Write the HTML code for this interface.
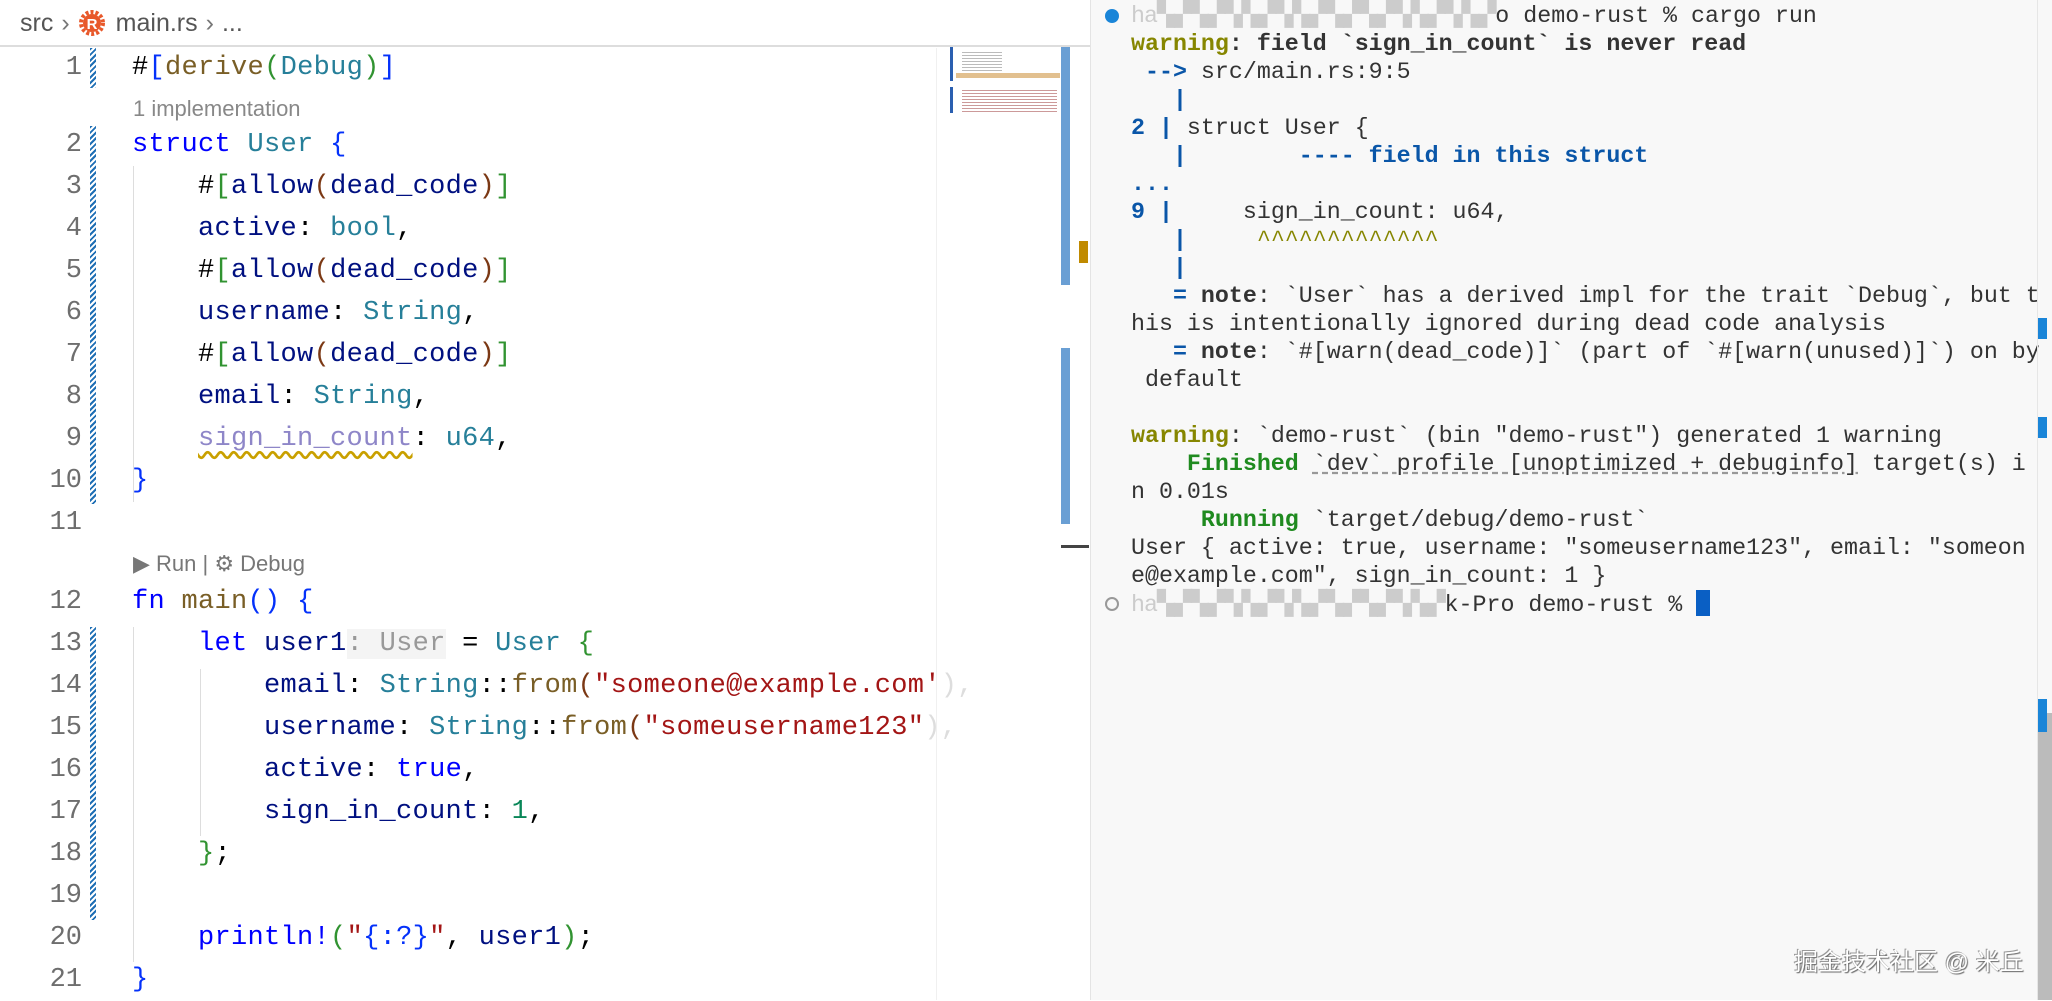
<!DOCTYPE html>
<html><head><meta charset="utf-8"><style>
*{margin:0;padding:0;box-sizing:border-box}
body{width:2052px;height:1000px;overflow:hidden;background:#fff;position:relative;font-family:"Liberation Sans",sans-serif}
.ed{position:absolute;left:0;top:0;width:1090px;height:1000px;background:#fff}
.bc{position:absolute;left:0;top:0;width:1090px;height:47px;border-bottom:2px solid #ddd;font-size:25px;color:#555;line-height:47px}
.ln{position:absolute;left:0;width:82px;text-align:right;font-family:"Liberation Mono",monospace;font-size:27px;color:#6e6e6e;line-height:42px}
.cd{position:absolute;left:132px;font-family:"Liberation Mono",monospace;font-size:27px;letter-spacing:0.3px;line-height:42px;white-space:pre;color:#001080}
.lens{position:absolute;left:133px;font-size:22px;color:#888;line-height:42px}
.hatch{position:absolute;left:90px;width:6px;background:repeating-linear-gradient(135deg,#1f6fb5 0 2px,#fff 2px 4px)}
.guide{position:absolute;width:1px;background:#ddd}
.k{color:#0000ff}.t{color:#267f99}.f{color:#795e26}.s{color:#a31515}.n{color:#098658}.b1{color:#0431fa}.b2{color:#319331}.b3{color:#7b3814}.p{color:#000}
.term{position:absolute;left:1090px;top:0;width:962px;height:1000px;background:#f8f8f8;border-left:1px solid #e4e4e4}
.tl{position:absolute;left:40px;font-family:"Liberation Mono",monospace;font-size:23.3px;line-height:28px;white-space:pre;color:#333}
.w{color:#868600;font-weight:bold}.bl{color:#0a56a8;font-weight:bold}.g{color:#1f8a1f;font-weight:bold}.bo{font-weight:bold}
.red{color:#ccc;letter-spacing:-1px}
</style></head><body>
<div class="ed">
<div class="bc"><span style="margin-left:20px">src</span><span style="margin:0 8px;color:#777">›</span><svg width="28" height="28" viewBox="0 0 28 28" style="vertical-align:-6px"><circle cx="14" cy="14" r="11" fill="none" stroke="#e8582a" stroke-width="4" stroke-dasharray="3 2"/><circle cx="14" cy="14" r="9" fill="#e8582a"/><text x="14" y="20" font-size="15" text-anchor="middle" fill="#fff" font-family="Liberation Sans" font-weight="bold">R</text></svg><span style="margin-left:10px">main.rs</span><span style="margin:0 8px;color:#777">›</span><span>...</span></div>

<div class="hatch" style="top:48px;height:40px"></div>
<div class="hatch" style="top:126px;height:378px"></div>
<div class="hatch" style="top:627px;height:293px"></div>
<div class="guide" style="left:133px;top:166px;height:336px"></div>
<div class="guide" style="left:133px;top:627px;height:335px"></div>
<div class="guide" style="left:200px;top:669px;height:167px"></div>

<div class="ln" style="top:47px">1</div><div class="cd" style="top:47px"><span class="p">#</span><span class="b1">[</span><span class="f">derive</span><span class="b2">(</span><span class="t">Debug</span><span class="b2">)</span><span class="b1">]</span></div>
<div class="lens" style="top:88px">1 implementation</div>
<div class="ln" style="top:124px">2</div><div class="cd" style="top:124px"><span class="k">struct</span> <span class="t">User</span> <span class="b1">{</span></div>
<div class="ln" style="top:166px">3</div><div class="cd" style="top:166px">    <span class="p">#</span><span class="b2">[</span>allow<span class="b3">(</span>dead_code<span class="b3">)</span><span class="b2">]</span></div>
<div class="ln" style="top:208px">4</div><div class="cd" style="top:208px">    active<span class="p">:</span> <span class="t">bool</span><span class="p">,</span></div>
<div class="ln" style="top:250px">5</div><div class="cd" style="top:250px">    <span class="p">#</span><span class="b2">[</span>allow<span class="b3">(</span>dead_code<span class="b3">)</span><span class="b2">]</span></div>
<div class="ln" style="top:292px">6</div><div class="cd" style="top:292px">    username<span class="p">:</span> <span class="t">String</span><span class="p">,</span></div>
<div class="ln" style="top:334px">7</div><div class="cd" style="top:334px">    <span class="p">#</span><span class="b2">[</span>allow<span class="b3">(</span>dead_code<span class="b3">)</span><span class="b2">]</span></div>
<div class="ln" style="top:376px">8</div><div class="cd" style="top:376px">    email<span class="p">:</span> <span class="t">String</span><span class="p">,</span></div>
<div class="ln" style="top:418px">9</div><div class="cd" style="top:418px">    <span style="color:#8e86c8;text-decoration:underline wavy #c9a000;text-underline-offset:6px">sign_in_count</span><span class="p">:</span> <span class="t">u64</span><span class="p">,</span></div>
<div class="ln" style="top:460px">10</div><div class="cd" style="top:460px"><span class="b1">}</span></div>
<div class="ln" style="top:502px">11</div>
<div class="lens" style="top:543px;color:#777">▶ Run | ⚙ Debug</div>
<div class="ln" style="top:581px">12</div><div class="cd" style="top:581px"><span class="k">fn</span> <span class="f">main</span><span class="b1">()</span> <span class="b1">{</span></div>
<div class="ln" style="top:623px">13</div><div class="cd" style="top:623px">    <span class="k">let</span> user1<span style="color:#999;background:#f4f4f4">: User</span> <span class="p">=</span> <span class="t">User</span> <span class="b2">{</span></div>
<div class="ln" style="top:665px">14</div><div class="cd" style="top:665px">        email<span class="p">:</span> <span class="t">String</span><span class="p">::</span><span class="f">from</span><span class="b3">(</span><span class="s">"someone@example.com'</span><span style="color:#ddd">),</span></div>
<div class="ln" style="top:707px">15</div><div class="cd" style="top:707px">        username<span class="p">:</span> <span class="t">String</span><span class="p">::</span><span class="f">from</span><span class="b3">(</span><span class="s">"someusername123"</span><span style="color:#ddd">),</span></div>
<div class="ln" style="top:749px">16</div><div class="cd" style="top:749px">        active<span class="p">:</span> <span class="k">true</span><span class="p">,</span></div>
<div class="ln" style="top:791px">17</div><div class="cd" style="top:791px">        sign_in_count<span class="p">:</span> <span class="n">1</span><span class="p">,</span></div>
<div class="ln" style="top:833px">18</div><div class="cd" style="top:833px">    <span class="b2">}</span><span class="p">;</span></div>
<div class="ln" style="top:875px">19</div>
<div class="ln" style="top:917px">20</div><div class="cd" style="top:917px">    <span class="k">println!</span><span class="b2">(</span><span class="s">"</span><span class="b1">{:?}</span><span class="s">"</span><span class="p">,</span> user1<span class="b2">)</span><span class="p">;</span></div>
<div class="ln" style="top:959px">21</div><div class="cd" style="top:959px"><span class="b1">}</span></div>

<div style="position:absolute;left:936px;top:48px;width:1px;height:952px;background:#f0f0f0"></div>
<div style="position:absolute;left:950px;top:47px;width:3px;height:34px;background:#2a5fb0"></div>
<div style="position:absolute;left:950px;top:87px;width:3px;height:26px;background:#2a5fb0"></div>
<div style="position:absolute;left:956px;top:73px;width:104px;height:5px;background:#e2c08f"></div>
<div style="position:absolute;left:962px;top:50px;width:40px;height:22px;background:repeating-linear-gradient(#fff 0 2px,#bbb 2px 3px)"></div>
<div style="position:absolute;left:962px;top:88px;width:95px;height:24px;background:repeating-linear-gradient(#fff 0 2px,#c99 2px 3px)"></div>
<div style="position:absolute;left:1061px;top:47px;width:9px;height:238px;background:#6a9fd4"></div>
<div style="position:absolute;left:1061px;top:348px;width:9px;height:176px;background:#6a9fd4"></div>
<div style="position:absolute;left:1079px;top:241px;width:9px;height:22px;background:#c08a00"></div>
<div style="position:absolute;left:1061px;top:545px;width:28px;height:3px;background:#444"></div>
</div>

<div class="term">
<div style="position:absolute;left:14px;top:9px;width:14px;height:14px;border-radius:50%;background:#1a85d8"></div>
<div class="tl" style="top:2px"><span class="red">ha▚▞▚▞▚▚▞▚▚▞▚▞▚▞▚▚▞▚▚▞</span>o demo-rust % cargo run</div>
<div class="tl" style="top:30px"><span class="w">warning</span><span class="bo">: field `sign_in_count` is never read</span></div>
<div class="tl" style="top:58px"> <span class="bl">--&gt;</span> src/main.rs:9:5</div>
<div class="tl" style="top:86px">   <span class="bl">|</span></div>
<div class="tl" style="top:114px"><span class="bl">2</span> <span class="bl">|</span> struct User {</div>
<div class="tl" style="top:142px">   <span class="bl">|        ---- field in this struct</span></div>
<div class="tl" style="top:170px"><span class="bl">...</span></div>
<div class="tl" style="top:198px"><span class="bl">9</span> <span class="bl">|</span>     sign_in_count: u64,</div>
<div class="tl" style="top:226px">   <span class="bl">|</span>     <span class="w" style="font-weight:normal">^^^^^^^^^^^^^</span></div>
<div class="tl" style="top:254px">   <span class="bl">|</span></div>
<div class="tl" style="top:282px">   <span class="bl">=</span> <span class="bo">note</span>: `User` has a derived impl for the trait `Debug`, but t</div>
<div class="tl" style="top:310px">his is intentionally ignored during dead code analysis</div>
<div class="tl" style="top:338px">   <span class="bl">=</span> <span class="bo">note</span>: `#[warn(dead_code)]` (part of `#[warn(unused)]`) on by</div>
<div class="tl" style="top:366px"> default</div>
<div class="tl" style="top:422px"><span class="w">warning</span>: `demo-rust` (bin "demo-rust") generated 1 warning</div>
<div class="tl" style="top:450px">    <span class="g">Finished</span> <span style="text-decoration:underline dashed #999">`dev` profile [unoptimized + debuginfo]</span> target(s) i</div>
<div class="tl" style="top:478px">n 0.01s</div>
<div class="tl" style="top:506px">     <span class="g">Running</span> `target/debug/demo-rust`</div>
<div class="tl" style="top:534px">User { active: true, username: "someusername123", email: "someon</div>
<div class="tl" style="top:562px">e@example.com", sign_in_count: 1 }</div>
<div style="position:absolute;left:14px;top:597px;width:14px;height:14px;border-radius:50%;border:2px solid #999"></div>
<div class="tl" style="top:590px"><span class="red">ha▚▞▚▞▚▚▞▚▚▞▚▞▚▞▚▚▞</span>k-Pro demo-rust % <span style="display:inline-block;width:14px;height:26px;background:#0a5fc4;vertical-align:-5px"></span></div>
<div style="position:absolute;left:946px;top:0;width:1px;height:1000px;background:#e6e6e6"></div>
<div style="position:absolute;left:947px;top:713px;width:15px;height:287px;background:#bbb"></div>
<div style="position:absolute;left:947px;top:318px;width:9px;height:21px;background:#1a85d8"></div>
<div style="position:absolute;left:947px;top:417px;width:9px;height:21px;background:#1a85d8"></div>
<div style="position:absolute;left:947px;top:699px;width:9px;height:33px;background:#1a85d8"></div>
<div style="position:absolute;left:703px;top:942px;font-family:'Liberation Sans','Noto Sans CJK SC',sans-serif;font-size:24px;color:#fff;text-shadow:1px 1px 1px #666,-1px -1px 0 #999">掘金技术社区 @ 米丘</div>
</div>
</body></html>
